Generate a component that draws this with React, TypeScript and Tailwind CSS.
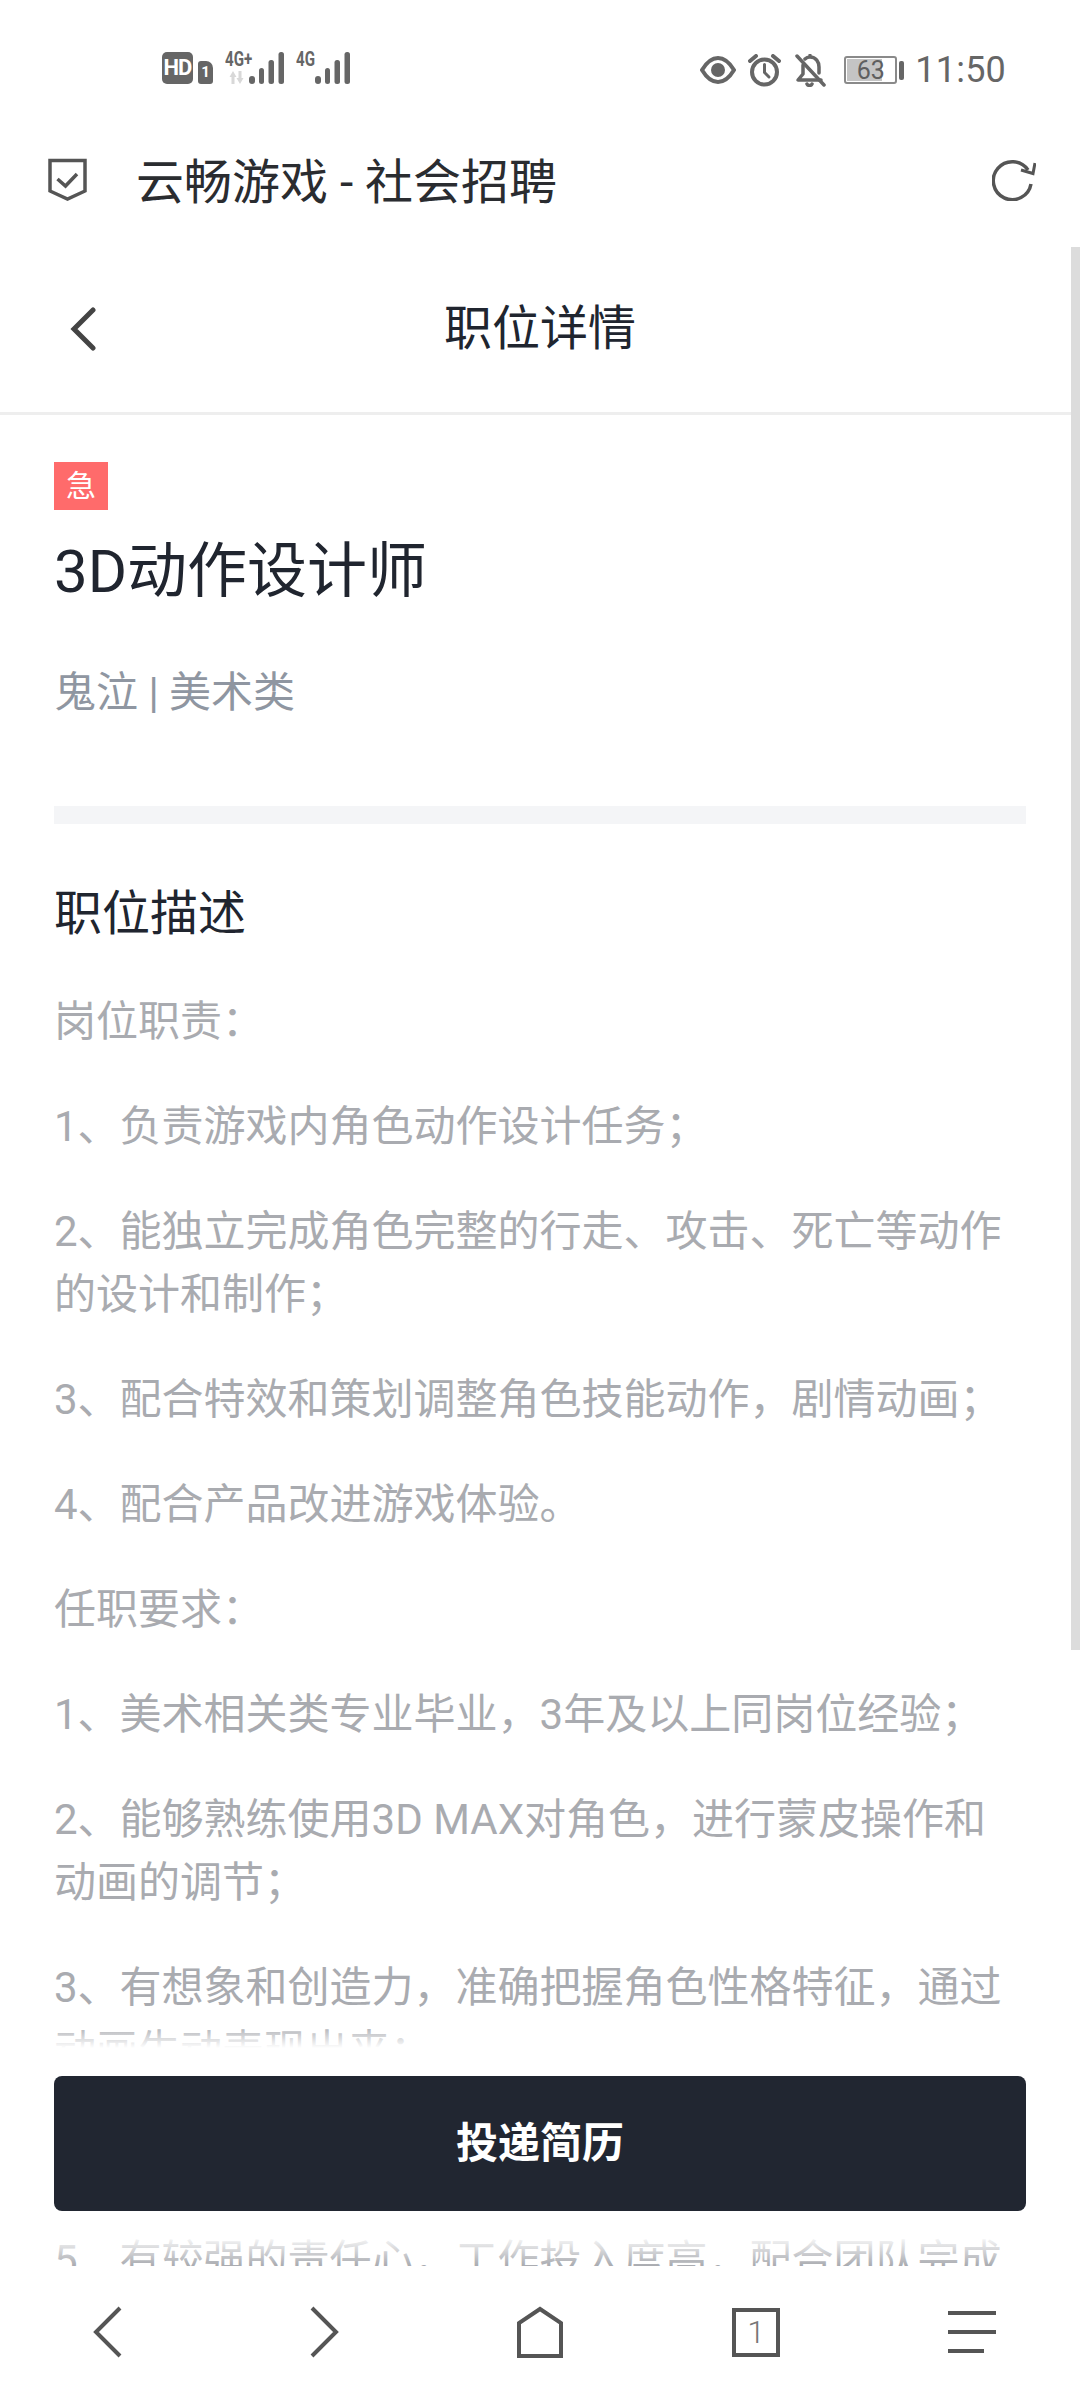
const paragraphs = [
  '岗位职责：',
  '1、负责游戏内角色动作设计任务；',
  '2、能独立完成角色完整的行走、攻击、死亡等动作的设计和制作；',
  '3、配合特效和策划调整角色技能动作，剧情动画；',
  '4、配合产品改进游戏体验。',
  '任职要求：',
  '1、美术相关类专业毕业，3年及以上同岗位经验；',
  '2、能够熟练使用3D MAX对角色，进行蒙皮操作和动画的调节；',
  '3、有想象和创造力，准确把握角色性格特征，通过动画生动表现出来；',
];

function SignalBars() {
  return (
    <svg width="35" height="32" viewBox="0 0 35 32" fill="#666">
      <rect x="0" y="24" width="6" height="8" rx="3" />
      <rect x="10" y="16" width="5" height="16" rx="2.5" />
      <rect x="19.5" y="8" width="5.5" height="24" rx="2.5" />
      <rect x="29.5" y="0" width="5.5" height="32" rx="2.5" />
    </svg>
  );
}

function StatusLeft() {
  return (
    <div className="flex items-start">
      <div className="w-[31px] h-[32px] rounded-[5px] bg-[#666] text-white flex items-center justify-center text-[22px] font-bold leading-none font-['Roboto',sans-serif] tracking-[-1px]">
        HD
      </div>
      <div className="ml-[5px] mt-[9px] w-[15px] h-[23px] rounded-[3px] rounded-tr-[7px] bg-[#666] text-white flex items-center justify-center text-[15px] font-bold leading-none font-['Roboto',sans-serif]">
        1
      </div>
      <div className="relative ml-[36px]">
        <span className="absolute left-[-24px] top-[-3px] w-[28px] text-[21px] leading-[20px] font-bold text-[#666] font-['Roboto',sans-serif] scale-x-[0.72] origin-left whitespace-nowrap">
          4G+
        </span>
        <svg className="absolute left-[-20px] top-[19px]" width="15" height="13" viewBox="0 0 15 13" fill="#d8d8d8">
          <path d="M4 0 L7.5 6 L5.5 6 L5.5 13 L2.5 13 L2.5 6 L0.5 6 Z" />
          <path d="M11 13 L14.5 7 L12.5 7 L12.5 0 L9.5 0 L9.5 7 L7.5 7 Z" />
        </svg>
        <SignalBars />
      </div>
      <div className="relative ml-[31px]">
        <span className="absolute left-[-19px] top-[-3px] text-[21px] leading-[20px] font-bold text-[#666] font-['Roboto',sans-serif] scale-x-[0.72] origin-left whitespace-nowrap">
          4G
        </span>
        <SignalBars />
      </div>
    </div>
  );
}

function StatusRight() {
  return (
    <div className="flex items-center text-[#666]">
      <svg width="36" height="28" viewBox="0 0 36 28" fill="none" stroke="#666" strokeWidth="4">
        <path d="M2 14 C8 4 13 2 18 2 C23 2 28 4 34 14 C28 24 23 26 18 26 C13 26 8 24 2 14 Z" />
        <circle cx="18" cy="14" r="7" fill="#666" stroke="none" />
      </svg>
      <svg className="ml-[12px]" width="33" height="33" viewBox="0 0 33 33" fill="none" stroke="#666" strokeWidth="4" strokeLinecap="round">
        <circle cx="16.5" cy="18" r="12.5" />
        <path d="M16.5 10.5 V18.5 L21 23" strokeWidth="3" />
        <path d="M2 7 L8 2" />
        <path d="M31 7 L25 2" />
      </svg>
      <svg className="ml-[14px]" width="31" height="33" viewBox="0 0 31 33" fill="none" stroke="#666" strokeWidth="3.5" strokeLinecap="round" strokeLinejoin="round">
        <path d="M8 11 L8 20 L3 26 L26 26" />
        <path d="M10 5 C12 3 14 3 15 3 L15 1.5 M15 3 C21 3 24 8 24 13 L24 19" />
        <path d="M2 2 L29 31" />
        <path d="M12 30 C13 32 16 32 17 30" />
      </svg>
      <div className="ml-[18px] w-[53px] h-[28px] rounded-[3px] border-2 border-[#8a8a8a] relative flex items-center">
        <div className="ml-[1px] w-[35px] h-[22px] bg-[#c4c4c4]" />
        <span className="absolute inset-0 flex items-center justify-center text-[25px] leading-none font-['Roboto',sans-serif] text-[#5f5f5f]">
          63
        </span>
      </div>
      <div className="ml-[2px] w-[5px] h-[19px] rounded-[2px] bg-[#666]" />
      <span className="ml-[11px] text-[36px] leading-none tracking-[0.2px] font-['Roboto',sans-serif] text-[#666]">11:50</span>
    </div>
  );
}

function BottomNav() {
  return (
    <div className="h-[134px] bg-white grid grid-cols-5 items-center pb-[2px] shrink-0">
      <div className="flex justify-center">
        <svg width="30" height="52" viewBox="0 0 30 52" fill="none" stroke="#555" strokeWidth="4">
          <path d="M27 2 L3 26 L27 50" />
        </svg>
      </div>
      <div className="flex justify-center">
        <svg width="30" height="52" viewBox="0 0 30 52" fill="none" stroke="#555" strokeWidth="4">
          <path d="M3 2 L27 26 L3 50" />
        </svg>
      </div>
      <div className="flex justify-center">
        <svg width="46" height="52" viewBox="0 0 46 52" fill="none" stroke="#555" strokeWidth="4">
          <path d="M2 50 L2 17 L23 3 L44 17 L44 50 Z" />
        </svg>
      </div>
      <div className="flex justify-center">
        <div className="w-[48px] h-[49px] border-[4px] border-[#555] flex items-center justify-center text-[32px] leading-none text-[#777] font-['Roboto',sans-serif] font-light">
          1
        </div>
      </div>
      <div className="flex justify-center">
        <div className="w-[48px] flex flex-col gap-[15px]">
          <div className="h-[4px] bg-[#555]" />
          <div className="h-[4px] bg-[#555]" />
          <div className="h-[4px] w-[36px] bg-[#555]" />
        </div>
      </div>
    </div>
  );
}

export default function App() {
  return (
    <div className="w-[1080px] h-[2400px] bg-white overflow-hidden flex flex-col font-['Roboto','Noto_Sans_CJK_SC',sans-serif]">
      {/* Status bar */}
      <div className="h-[130px] shrink-0 flex items-start justify-between pt-[52px] pl-[162px] pr-[74px]">
        <StatusLeft />
        <StatusRight />
      </div>

      {/* Browser bar */}
      <div className="h-[117px] shrink-0 flex items-center pl-[48px] pr-[44px] pb-[17px]">
        <svg className="-mt-[1px]" width="39" height="43" viewBox="0 0 39 43" fill="none" stroke="#555" strokeWidth="3.5">
          <path d="M2 2.5 H37 V33 L19.5 41 L2 33 Z" />
          <path d="M9.5 21 L17.5 28 L29 16" />
        </svg>
        <span className="ml-[49px] pt-[5px] text-[48px] leading-none text-[#2a2c30]">云畅游戏 - 社会招聘</span>
        <svg className="ml-auto -mt-[3px]" width="44" height="44" viewBox="0 0 44 44" fill="none" stroke="#555" strokeWidth="3.5">
          <path d="M36 13 A19 19 0 1 0 39 27" />
          <path d="M29 13 L41 16.5 L43 6" strokeWidth="3" />
        </svg>
      </div>

      {/* Web page */}
      <div className="relative flex-1 min-h-0 flex flex-col">
        <div className="absolute right-0 top-0 w-[9px] h-[1403px] bg-[#dcdcdc] z-20" />

        <div className="h-[168px] shrink-0 relative flex items-center justify-center border-b-[3px] border-[#eeeeee] pb-[2px]">
          <svg className="absolute left-[68px] top-[60px]" width="28" height="44" viewBox="0 0 28 44" fill="none" stroke="#444" strokeWidth="5" strokeLinecap="round">
            <path d="M25 3 L6 22 L25 41" />
          </svg>
          <h1 className="text-[48px] leading-none font-normal text-[#20252f]">职位详情</h1>
        </div>

        <div className="relative flex-1 min-h-0 overflow-hidden">
          <div className="px-[54px] pt-[47px]">
            <div className="w-[54px] h-[48px] bg-[#ff6b6b] text-white text-[30px] leading-[48px] text-center">急</div>
            <div className="mt-[17px] text-[60px] leading-[90px] text-[#20252f]">3D动作设计师</div>
            <div className="mt-[44px] text-[42px] leading-[63px] text-[#8f96a1]">鬼泣 | 美术类</div>
            <div className="mt-[82px] h-[18px] bg-[#f4f5f7]" />
            <div className="mt-[54px] text-[48px] leading-[72px] text-[#20252f]">职位描述</div>
            <div className="mt-[40px] flex flex-col gap-[42px] text-[42px] leading-[63px] text-[#a9abb0]">
              {paragraphs.map((text) => (
                <p key={text}>{text}</p>
              ))}
              <div className="h-[63px]" />
              <p>5、有较强的责任心，工作投入度高，配合团队完成</p>
            </div>
          </div>

          {/* Apply button with white fade around it */}
          <div className="absolute left-0 right-0 bottom-0 h-[241px] px-[54px] pt-[51px] bg-[linear-gradient(to_bottom,rgba(255,255,255,0)_0px,#fff_23px,#fff_210px,rgba(255,255,255,0)_241px)]">
            <button className="w-full h-[135px] rounded-[8px] bg-[#212631] text-white text-[42px] font-bold">投递简历</button>
          </div>
        </div>
      </div>

      <BottomNav />
    </div>
  );
}
